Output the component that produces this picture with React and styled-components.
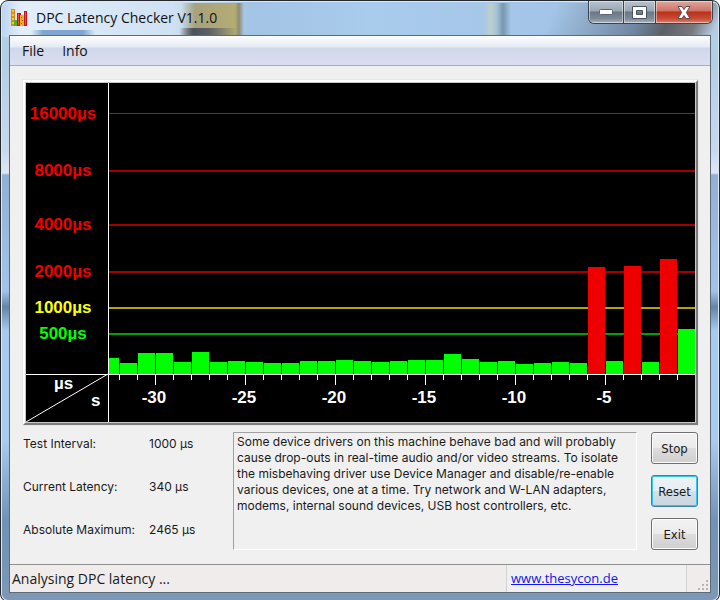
import styled, { createGlobalStyle } from 'styled-components';

const GlobalStyle = createGlobalStyle`
  * {
    box-sizing: border-box;
  }

  body {
    margin: 0;
    background: #ffffff;
    color: #1a1a1a;
    font-family: 'Open Sans', 'Noto Sans', sans-serif;
    font-size: 13px;
    line-height: 16px;
  }
`;

// Window frame, the glass colours come from what lies behind the window
const Frame = styled.div`
  display: flex;
  flex-direction: column;
  min-height: 100vh;
  padding: 0 8px 8px;
  border: 1px solid #23282f;
  border-radius: 8px;
  box-shadow: inset 0 0 0 1px #dbe8f4;
  background:
    linear-gradient(90deg, transparent 30px, #7fa5d0 42px, #7fa5d0 82px, transparent 94px) 0 29px / 100% 6px no-repeat,
    linear-gradient(90deg, transparent 178px, #4a535e 192px, #5b6167 208px, transparent 236px) 0 27px / 100% 8px no-repeat,
    linear-gradient(90deg, transparent 180px, #a6a27c 194px, #b5ac72 234px, #8d8a72 238px, transparent 243px) 0 2px / 100% 33px no-repeat,
    linear-gradient(115deg, transparent 76%, #6f86a2 88%, #5b6067 92%, #77797c 96%, transparent 99%) 0 2px / 100% 33px no-repeat,
    linear-gradient(90deg, transparent 482px, #bccfca 490px, #a3c0d8 496px, #7796ae 502px, transparent 510px) 0 2px / 100% 33px no-repeat,
    linear-gradient(90deg, #b9d4ee, #e3eefa 20px, #cfe1f3 170px, #a3c4e4 250px, #a9cbec 370px, #a3c4e6 560px, #b4cde4) 0 0 / 100% 36px no-repeat,
    linear-gradient(180deg, #b3cfe4 60px, #c8d9ec 150px, #dfe6f3 172px, #91b0d6 174px, #a3c4ea 290px, #6484a6 306px, #a7cbf0 330px, #a9cbf0 440px, #6f92b6 520px, #7d99b4);
`;

const TitleBar = styled.header`
  display: flex;
  align-items: center;
  justify-content: space-between;
  height: 34px;
  margin-right: -2px;
  padding-left: 2px;
`;

const Title = styled.h1`
  display: flex;
  align-items: center;
  gap: 8px;
  margin: 0;
  font-size: 14px;
  font-weight: 400;
  line-height: 20px;
  color: #111111;
`;

const WindowButtons = styled.div`
  display: flex;
  align-self: flex-start;
  height: 23px;
  border: 1px solid #3a444e;
  border-top: 0;
  border-radius: 0 0 6px 6px;
  overflow: hidden;
`;

const WindowButton = styled.button`
  display: flex;
  align-items: center;
  justify-content: center;
  width: ${({ $width }) => $width};
  padding: 0;
  border: 0;
  box-shadow: inset 0 0 0 1px rgba(255, 255, 255, 0.45);
  background: ${({ $close }) =>
    $close
      ? 'linear-gradient(#dfa79d, #cf7465 45%, #b8301b 50%, #c94c35 80%, #d98370)'
      : 'linear-gradient(#b9c3ce, #9aa6b3 45%, #6a7886 50%, #7d8b99 80%, #a7b4c0)'};

  & + & {
    border-left: 1px solid #3a444e;
  }
`;

// Client area
const Client = styled.main`
  display: flex;
  flex: 1;
  flex-direction: column;
  border: 1px solid #5d6a7a;
  background: #f0f0f0;
`;

const MenuBar = styled.nav`
  display: flex;
  height: 30px;
  padding: 0 3px;
  border-bottom: 1px solid #a9acbd;
  background: linear-gradient(#fdfdfe, #e6ebf4 11px, #d0d7e8 12px, #dadff0 28px);
`;

const MenuItem = styled.button`
  padding: 0 9px;
  border: 0;
  background: none;
  color: #111111;
  font-family: inherit;
  font-size: 14px;
`;

const Body = styled.div`
  display: flex;
  flex: 1;
  flex-direction: column;
  gap: 7px;
  padding: 14px 12px 14px 13px;
`;

const ChartFrame = styled.div`
  padding: 1px;
  border: 2px solid;
  border-color: #ffffff #7c7c7c #7c7c7c #ffffff;
  outline: 1px solid #e6e6e6;
  background: #c8c8c8;
`;

const ChartSvg = styled.svg`
  display: block;
  width: 100%;
  height: auto;
  background: #000000;
  font-family: 'Liberation Sans', sans-serif;
  font-size: 17px;
  font-weight: 700;
`;

const Details = styled.div`
  display: grid;
  grid-template-columns: 210px 1fr 47px;
  font-family: Inter, sans-serif;
  font-size: 12px;
`;

const Readings = styled.dl`
  display: grid;
  grid-template-columns: 126px 1fr;
  align-content: start;
  gap: 27px 0;
  margin: 4px 0 0;
`;

const Reading = styled.div`
  display: contents;

  dd {
    margin: 0;
  }
`;

const Message = styled.p`
  margin: 0 14px 0 0;
  padding: 1px 3px;
  border: 1px solid;
  border-color: #a0a0a0 #ffffff #ffffff #a0a0a0;
`;

const Actions = styled.div`
  display: flex;
  flex-direction: column;
  gap: 11px;
`;

const ActionButton = styled.button`
  height: 32px;
  padding: 0;
  border: 1px solid ${({ $active }) => ($active ? '#3c7fb1' : '#707070')};
  border-radius: 3px;
  box-shadow: inset 0 0 0 1px ${({ $active }) => ($active ? '#33c5f3' : '#fcfcfc')};
  background: ${({ $active }) =>
    $active
      ? 'linear-gradient(#eef3f6, #e6ecf0 50%, #d6dfe5 50%, #c8d6de)'
      : 'linear-gradient(#f2f2f2, #ebebeb 50%, #dddddd 50%, #cfcfcf)'};
  color: #1a1a1a;
  font-family: 'DejaVu Sans Condensed', sans-serif;
  font-size: 13px;
`;

const StatusBar = styled.footer`
  display: grid;
  grid-template-columns: 1fr 181px 23px;
  align-items: center;
  height: 28px;
  border-top: 1px solid #8f8f8f;
  background: #f0ecec;
  line-height: 20px;
`;

const StatusText = styled.span`
  padding-left: 2px;
  font-size: 14px;
`;

const StatusLink = styled.span`
  align-self: stretch;
  padding: 3px 4px;
  border: solid #d2d2d2;
  border-width: 0 1px;
  background: #f0f0f0;

  a {
    color: #1414ee;
  }
`;

const Grip = styled.svg`
  align-self: end;
  justify-self: end;
  fill: #b5b5b5;
`;

const RED = '#ee0000';
const YELLOW = '#ffff00';
const GREEN = '#00ff00';

const LEVELS = [
  { label: '16000µs', y: 30, color: RED, line: '#dd0000', weight: 1 },
  { label: '8000µs', y: 87, color: RED, line: '#a00000', weight: 2 },
  { label: '4000µs', y: 141, color: RED, line: '#a00000', weight: 2 },
  { label: '2000µs', y: 188, color: RED, line: '#a00000', weight: 2 },
  { label: '1000µs', y: 224, color: YELLOW, line: '#b0a800', weight: 2 },
  { label: '500µs', y: 250, color: GREEN, line: '#00a000', weight: 2 }
];

// Bar heights in pixels, oldest second first
const SAMPLES = [
  16, 11, 21, 21, 12, 22, 12, 13, 12, 11, 11, 13, 13, 14, 13, 12, 13, 14, 14,
  20, 15, 12, 13, 10, 11, 12, 11, 107, 13, 108, 12, 115, 45
];

const AXIS_X = 82;
const AXIS_Y = 291;
const STEP = 18;
const FIRST_TICK = 93;

function LatencyChart() {
  return (
    <ChartSvg viewBox='0 0 669 339' role='img' aria-label='DPC latency'>
      {LEVELS.map(({ label, y, color, line, weight }) => (
        <g key={label}>
          <text x='37' y={y + 6} textAnchor='middle' fill={color}>
            {label}
          </text>
          <rect x={AXIS_X} y={y} width='587' height={weight} fill={line} />
        </g>
      ))}

      {SAMPLES.map((height, i) => {
        const x = i === 0 ? AXIS_X + 1 : FIRST_TICK + 1 + (i - 1) * STEP;
        return (
          <rect
            key={i}
            x={x}
            y={AXIS_Y - height}
            width={i === 0 ? 10 : STEP - 1}
            height={height}
            fill={height > 100 ? RED : GREEN}
          />
        );
      })}

      {/* Axes, ticks every second and a long one every five */}
      <g fill='#ffffff'>
        <rect x={AXIS_X} y='0' width='1' height='339' />
        <rect x='0' y={AXIS_Y} width='669' height='1' />
        {Array.from({ length: 32 }, (_, i) => (
          <rect
            key={i}
            x={FIRST_TICK + i * STEP}
            y={AXIS_Y}
            width='1'
            height={i % 5 === 2 ? 11 : 6}
          />
        ))}
        {[-30, -25, -20, -15, -10, -5].map((second, i) => (
          <text
            key={second}
            x={FIRST_TICK + (2 + i * 5) * STEP - 1}
            y='320'
            textAnchor='middle'
          >
            {second}
          </text>
        ))}
        <text x='28' y='306'>µs</text>
        <text x='65' y='323'>s</text>
      </g>
      <line x1='0' y1='339' x2={AXIS_X} y2={AXIS_Y} stroke='#ffffff' />
    </ChartSvg>
  );
}

function AppIcon() {
  return (
    <svg width='17' height='18' viewBox='0 0 17 18' aria-hidden='true'>
      <path fill='#e08a1e' d='M0 0h4v17H0z' />
      <path fill='#f3c934' d='M1 1h2v2H1zM1 5h2v2H1zM1 9h2v2H1zM1 13h2v2H1z' />
      <path fill='#4fae2c' d='M3 11h4v6H3z' />
      <path fill='#c8171c' d='M6 4h4v13H6zM13 2h3v15h-3z' />
      <path fill='#e8b21f' d='M9 6h4v11H9z' />
      <path fill='#8c5a10' d='M10 8h1v1h-1zM11 11h1v1h-1zM10 14h1v1h-1z' />
      <path fill='#f04a3a' d='M7 5h1v11H7zM14 3h1v13h-1z' />
    </svg>
  );
}

export default function App() {
  return (
    <>
      <GlobalStyle />
      <Frame>
        <TitleBar>
          <Title>
            <AppIcon />
            DPC Latency Checker V1.1.0
          </Title>
          <WindowButtons>
            <WindowButton $width='34px' aria-label='Minimize'>
              <svg width='14' height='6' viewBox='0 0 14 6'>
                <rect x='.5' y='.5' width='13' height='5' rx='1' fill='#fff' stroke='#5d6670' />
              </svg>
            </WindowButton>
            <WindowButton $width='32px' aria-label='Maximize'>
              <svg width='15' height='13' viewBox='0 0 15 13'>
                <path
                  fill='#fff'
                  stroke='#4d5660'
                  fillRule='evenodd'
                  d='M.5.5h14v12H.5zM4.5 4.5h6v4h-6z'
                />
              </svg>
            </WindowButton>
            <WindowButton $width='57px' $close aria-label='Close'>
              <svg width='14' height='13' viewBox='0 0 14 13'>
                <path
                  fill='#fff'
                  stroke='#5a4a50'
                  d='M1 .5h4l2 3 2-3h4l-3.600 6 3.600 6H9l-2-3-2 3H1l3.600-6z'
                />
              </svg>
            </WindowButton>
          </WindowButtons>
        </TitleBar>

        <Client>
          <MenuBar>
            <MenuItem>File</MenuItem>
            <MenuItem>Info</MenuItem>
          </MenuBar>

          <Body>
            <ChartFrame>
              <LatencyChart />
            </ChartFrame>

            <Details>
              <Readings>
                <Reading>
                  <dt>Test Interval:</dt>
                  <dd>1000 µs</dd>
                </Reading>
                <Reading>
                  <dt>Current Latency:</dt>
                  <dd>340 µs</dd>
                </Reading>
                <Reading>
                  <dt>Absolute Maximum:</dt>
                  <dd>2465 µs</dd>
                </Reading>
              </Readings>

              <Message>
                Some device drivers on this machine behave bad and will probably
                cause drop-outs in real-time audio and/or video streams. To
                isolate the misbehaving driver use Device Manager and
                disable/re-enable various devices, one at a time. Try network
                and W-LAN adapters, modems, internal sound devices, USB host
                controllers, etc.
              </Message>

              <Actions>
                <ActionButton>Stop</ActionButton>
                <ActionButton $active>Reset</ActionButton>
                <ActionButton>Exit</ActionButton>
              </Actions>
            </Details>
          </Body>

          <StatusBar>
            <StatusText>Analysing DPC latency ...</StatusText>
            <StatusLink>
              <a href='http://www.thesycon.de'>www.thesycon.de</a>
            </StatusLink>
            <Grip width='12' height='12' viewBox='0 0 12 12' aria-hidden='true'>
              <path d='M8 0h2v2H8zM4 4h2v2H4zM8 4h2v2H8zM0 8h2v2H0zM4 8h2v2H4zM8 8h2v2H8z' />
            </Grip>
          </StatusBar>
        </Client>
      </Frame>
    </>
  );
}
